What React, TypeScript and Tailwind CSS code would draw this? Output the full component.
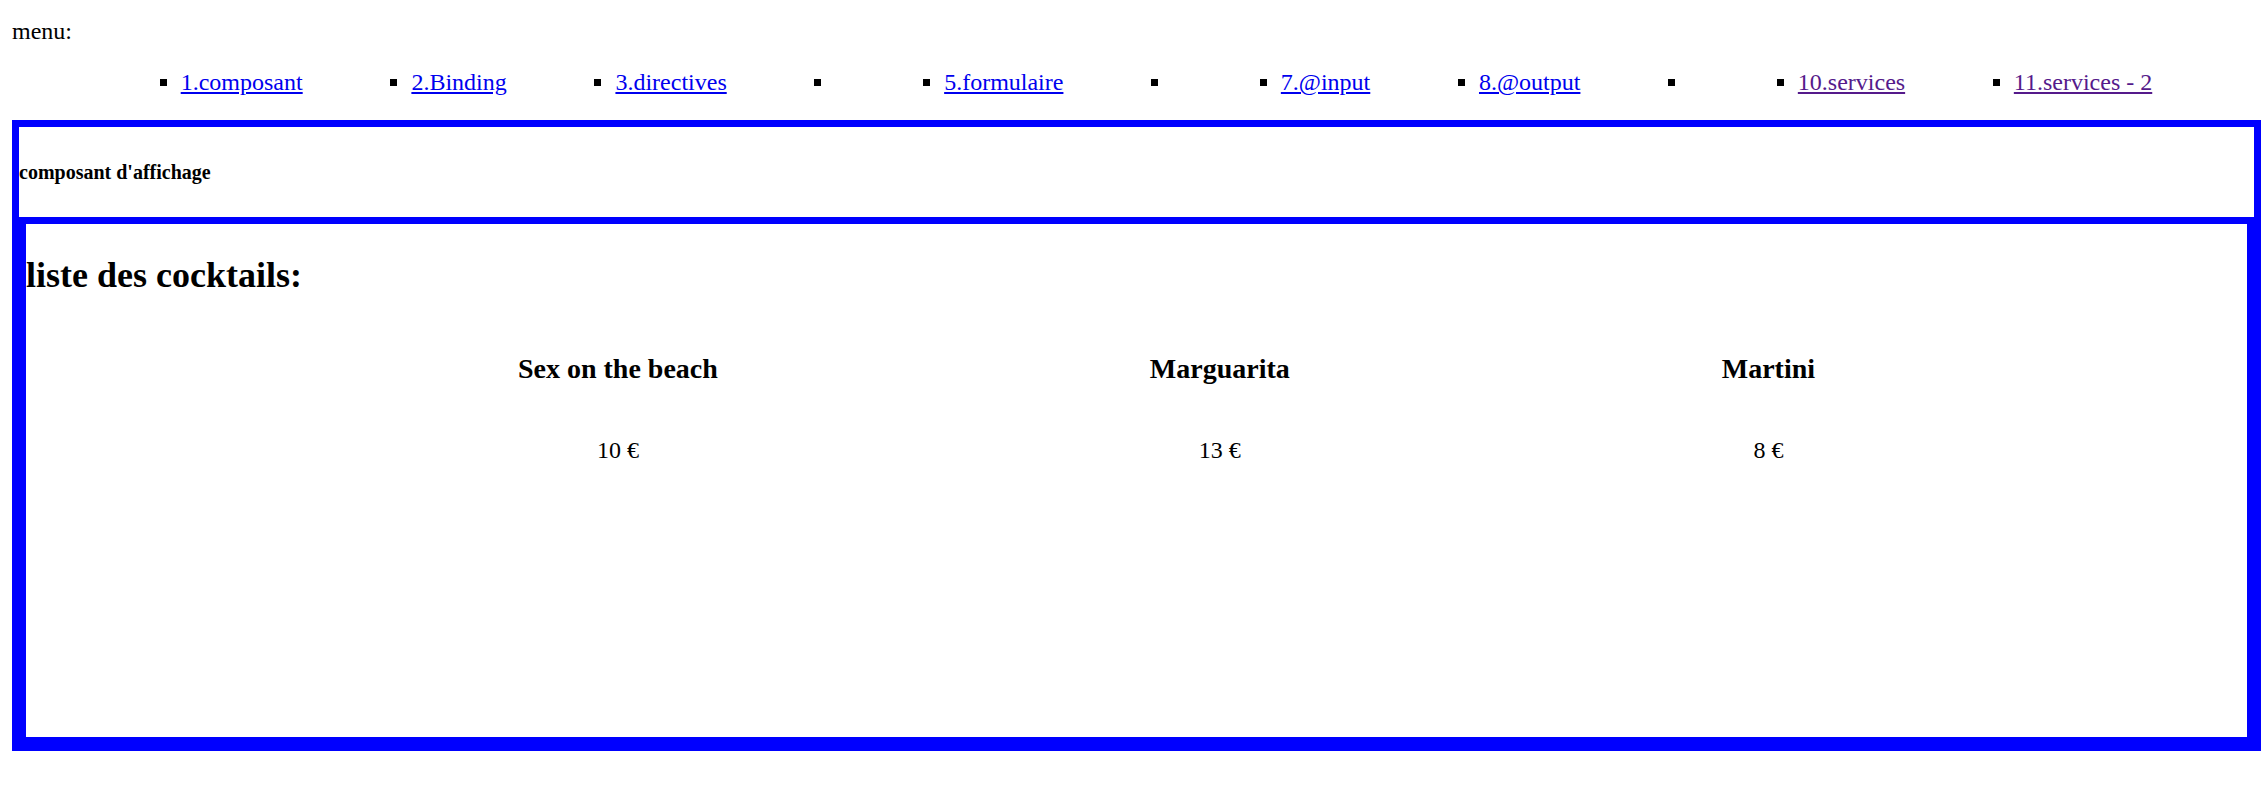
type MenuLink = { label: string; visited?: boolean } | null;

const links: MenuLink[] = [
  { label: "1.composant" },
  { label: "2.Binding" },
  { label: "3.directives" },
  null,
  { label: "5.formulaire" },
  null,
  { label: "7.@input" },
  { label: "8.@output" },
  null,
  { label: "10.services", visited: true },
  { label: "11.services - 2", visited: true },
];

const cocktails = [
  { name: "Sex on the beach", price: "10 €" },
  { name: "Marguarita", price: "13 €" },
  { name: "Martini", price: "8 €" },
];

export default function App() {
  return (
    <div className="min-h-[802px] bg-white pl-[12px] pr-[6px] pt-[18px] font-['Liberation_Serif','Times_New_Roman',serif] text-[24px] leading-[27px] text-black">
      <div>menu:</div>
      <ul className="my-[24px] flex list-[square] justify-evenly pl-[60px]">
        {links.map((l, i) => (
          <li key={i} className="list-item">
            {l && (
              <a
                href="#"
                className={
                  l.visited
                    ? "text-[#551a8b] underline"
                    : "text-[#0000ee] underline"
                }
              >
                {l.label}
              </a>
            )}
          </li>
        ))}
      </ul>
      <div className="border-[7px] border-[#0000ff]">
        <h5 className="my-[33px] text-[20px] font-bold leading-[24px]">
          composant d'affichage
        </h5>
        <div className="h-[527px] border-[7px] border-[#0000ff]">
          <h2 className="mt-[31px] text-[36px] font-bold leading-[40px]">
            liste des cocktails:
          </h2>
          <ul className="mt-[58px] flex justify-evenly pl-[60px]">
            {cocktails.map((c) => (
              <li key={c.name} className="text-center">
                <h3 className="text-[28px] font-bold leading-[31px]">{c.name}</h3>
                <p className="mt-[53px] leading-[27px]">{c.price}</p>
              </li>
            ))}
          </ul>
        </div>
      </div>
    </div>
  );
}
